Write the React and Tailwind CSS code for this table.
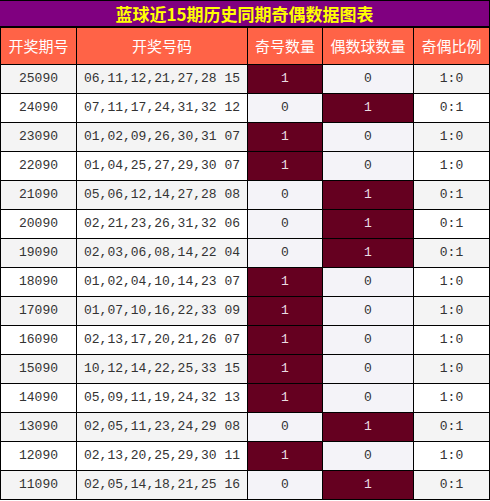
const rows = [
  ["25090", "06,11,12,21,27,28 15", 1, 0],
  ["24090", "07,11,17,24,31,32 12", 0, 1],
  ["23090", "01,02,09,26,30,31 07", 1, 0],
  ["22090", "01,04,25,27,29,30 07", 1, 0],
  ["21090", "05,06,12,14,27,28 08", 0, 1],
  ["20090", "02,21,23,26,31,32 06", 0, 1],
  ["19090", "02,03,06,08,14,22 04", 0, 1],
  ["18090", "01,02,04,10,14,23 07", 1, 0],
  ["17090", "01,07,10,16,22,33 09", 1, 0],
  ["16090", "02,13,17,20,21,26 07", 1, 0],
  ["15090", "10,12,14,22,25,33 15", 1, 0],
  ["14090", "05,09,11,19,24,32 13", 1, 0],
  ["13090", "02,05,11,23,24,29 08", 0, 1],
  ["12090", "02,13,20,25,29,30 11", 1, 0],
  ["11090", "02,05,14,18,21,25 16", 0, 1],
];

const headers = ["开奖期号", "开奖号码", "奇号数量", "偶数球数量", "奇偶比例"];

const mono = "font-['Liberation_Mono',monospace] text-[13px]";

function CountCell({ on, value }) {
  return (
    <div
      className={`flex items-center justify-center ${mono} ${
        on ? "bg-[#650020] text-[#eadde2]" : "bg-[#f4f3f8] text-[#333]"
      }`}
    >
      {value}
    </div>
  );
}

export default function App() {
  return (
    <div className="w-[490px] h-[501px] bg-white font-['Noto_Sans_CJK_SC','Noto_Sans',sans-serif]">
      <div className="bg-black pt-px">
        <div className="h-[25px] bg-[#800080] mr-px flex items-center justify-center text-[17px] font-bold text-[#ffff00] leading-none">
          蓝球近15期历史同期奇偶数据图表
        </div>
      </div>
      <div className="grid grid-cols-[75px_170px_74px_90px_75px] gap-px bg-black p-px pt-[2px]">
        {headers.map((h) => (
          <div
            key={h}
            className="h-[36px] bg-[#ff6347] text-white text-[15px] flex items-center justify-center"
          >
            {h}
          </div>
        ))}
        {rows.map(([id, nums, odd, even], i) => {
          const zebra = i % 2 === 0 ? "bg-[#f4f4f4]" : "bg-white";
          return [
            <div
              key={id + "a"}
              className={`h-[28px] flex items-center justify-center text-[#333] ${mono} ${zebra}`}
            >
              {id}
            </div>,
            <div
              key={id + "b"}
              className={`flex items-center justify-center whitespace-pre text-[#333] ${mono} ${zebra}`}
            >
              {nums}
            </div>,
            <CountCell key={id + "c"} on={odd === 1} value={odd} />,
            <CountCell key={id + "d"} on={even === 1} value={even} />,
            <div
              key={id + "e"}
              className={`flex items-center justify-center text-[#333] ${mono} ${zebra}`}
            >
              {odd}:{even}
            </div>,
          ];
        })}
      </div>
    </div>
  );
}
